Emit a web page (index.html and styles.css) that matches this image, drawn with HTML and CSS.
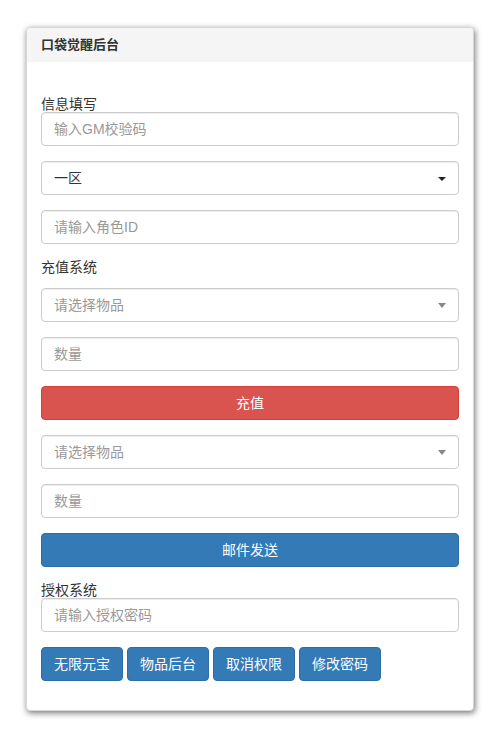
FILE: index.html
```html
<!DOCTYPE html>
<html lang="zh-CN">
<head>
    <meta charset="UTF-8">
    <meta name="viewport" content="width=device-width, initial-scale=1.0">
    <title>口袋觉醒后台</title>
    <link rel="stylesheet" href="styles.css">
</head>
<body>
    <div class="panel">
        <div class="panel-heading">口袋觉醒后台</div>
        <div class="panel-body">
            <label class="field-label">信息填写</label>
            <div class="form-group">
                <input type="text" class="form-control" placeholder="输入GM校验码">
            </div>
            <div class="form-group select-wrap">
                <select class="form-control">
                    <option>一区</option>
                    <option>二区</option>
                </select>
            </div>
            <div class="form-group">
                <input type="text" class="form-control" placeholder="请输入角色ID">
            </div>

            <label class="field-label section">充值系统</label>
            <div class="form-group select-wrap muted">
                <div class="form-control fake-select">请选择物品</div>
            </div>
            <div class="form-group">
                <input type="text" class="form-control" placeholder="数量">
            </div>
            <div class="form-group">
                <button type="button" class="btn btn-danger btn-block">充值</button>
            </div>
            <div class="form-group select-wrap muted">
                <div class="form-control fake-select">请选择物品</div>
            </div>
            <div class="form-group">
                <input type="text" class="form-control" placeholder="数量">
            </div>
            <div class="form-group">
                <button type="button" class="btn btn-primary btn-block">邮件发送</button>
            </div>

            <label class="field-label">授权系统</label>
            <div class="form-group">
                <input type="password" class="form-control" placeholder="请输入授权密码">
            </div>
            <div class="form-group btn-row">
                <button type="button" class="btn btn-primary">无限元宝</button>
                <button type="button" class="btn btn-primary">物品后台</button>
                <button type="button" class="btn btn-primary">取消权限</button>
                <button type="button" class="btn btn-primary">修改密码</button>
            </div>
        </div>
    </div>
</body>
</html>
```

FILE: styles.css
```css
body {
    font-family: "Helvetica Neue", Helvetica, Arial, "Liberation Sans", "Noto Sans CJK SC", sans-serif;
    font-size: 14px;
    color: #333;
    margin: 0;
    padding: 27px 26px;
    background-color: #fff;
}
.panel {
    border: 1px solid #d6d6d6;
    border-radius: 4px;
    background-color: #fff;
    box-shadow: 1px 2px 6px rgba(0,0,0,0.55);
    overflow: hidden;
}
.panel-heading {
    background-color: #f5f5f5;
    padding: 10px 14px;
    font-size: 13px;
    line-height: 14px;
    font-weight: bold;
    color: #333;
}
.panel-body {
    padding: 34px 14px 14px;
}
.field-label {
    display: block;
    line-height: 16px;
    color: #333;
}
.field-label.section {
    line-height: 17px;
    margin-bottom: 12px;
}
.form-group {
    margin-bottom: 15px;
}
.form-control {
    display: block;
    width: 100%;
    height: 34px;
    padding: 6px 12px;
    font-family: inherit;
    font-size: 14px;
    line-height: 20px;
    color: #555;
    background-color: #fff;
    border: 1px solid #ccc;
    border-radius: 4px;
    box-shadow: inset 0 1px 1px rgba(0,0,0,0.075);
    box-sizing: border-box;
    margin: 0;
}
.form-control::placeholder {
    color: #999;
}
select.form-control {
    -webkit-appearance: none;
    appearance: none;
    color: #333;
}
.fake-select {
    color: #999;
}
.select-wrap {
    position: relative;
}
.select-wrap::after {
    content: "";
    position: absolute;
    right: 13px;
    top: 16px;
    border-top: 4px solid #222;
    border-left: 4px solid transparent;
    border-right: 4px solid transparent;
}
.select-wrap.muted::after {
    border-top-color: #888;
    border-top-width: 5px;
    border-left-width: 4px;
    border-right-width: 4px;
    top: 15px;
}
.btn {
    display: inline-block;
    height: 34px;
    padding: 6px 12px;
    font-family: inherit;
    font-size: 14px;
    line-height: 20px;
    color: #fff;
    border: 1px solid transparent;
    border-radius: 4px;
    box-sizing: border-box;
    cursor: pointer;
}
.btn-block {
    display: block;
    width: 100%;
}
.btn-danger {
    background-color: #d9534f;
    border-color: #d43f3a;
}
.btn-primary {
    background-color: #337ab7;
    border-color: #2e6da4;
}
.btn-row {
    display: flex;
    gap: 4px;
}
```
